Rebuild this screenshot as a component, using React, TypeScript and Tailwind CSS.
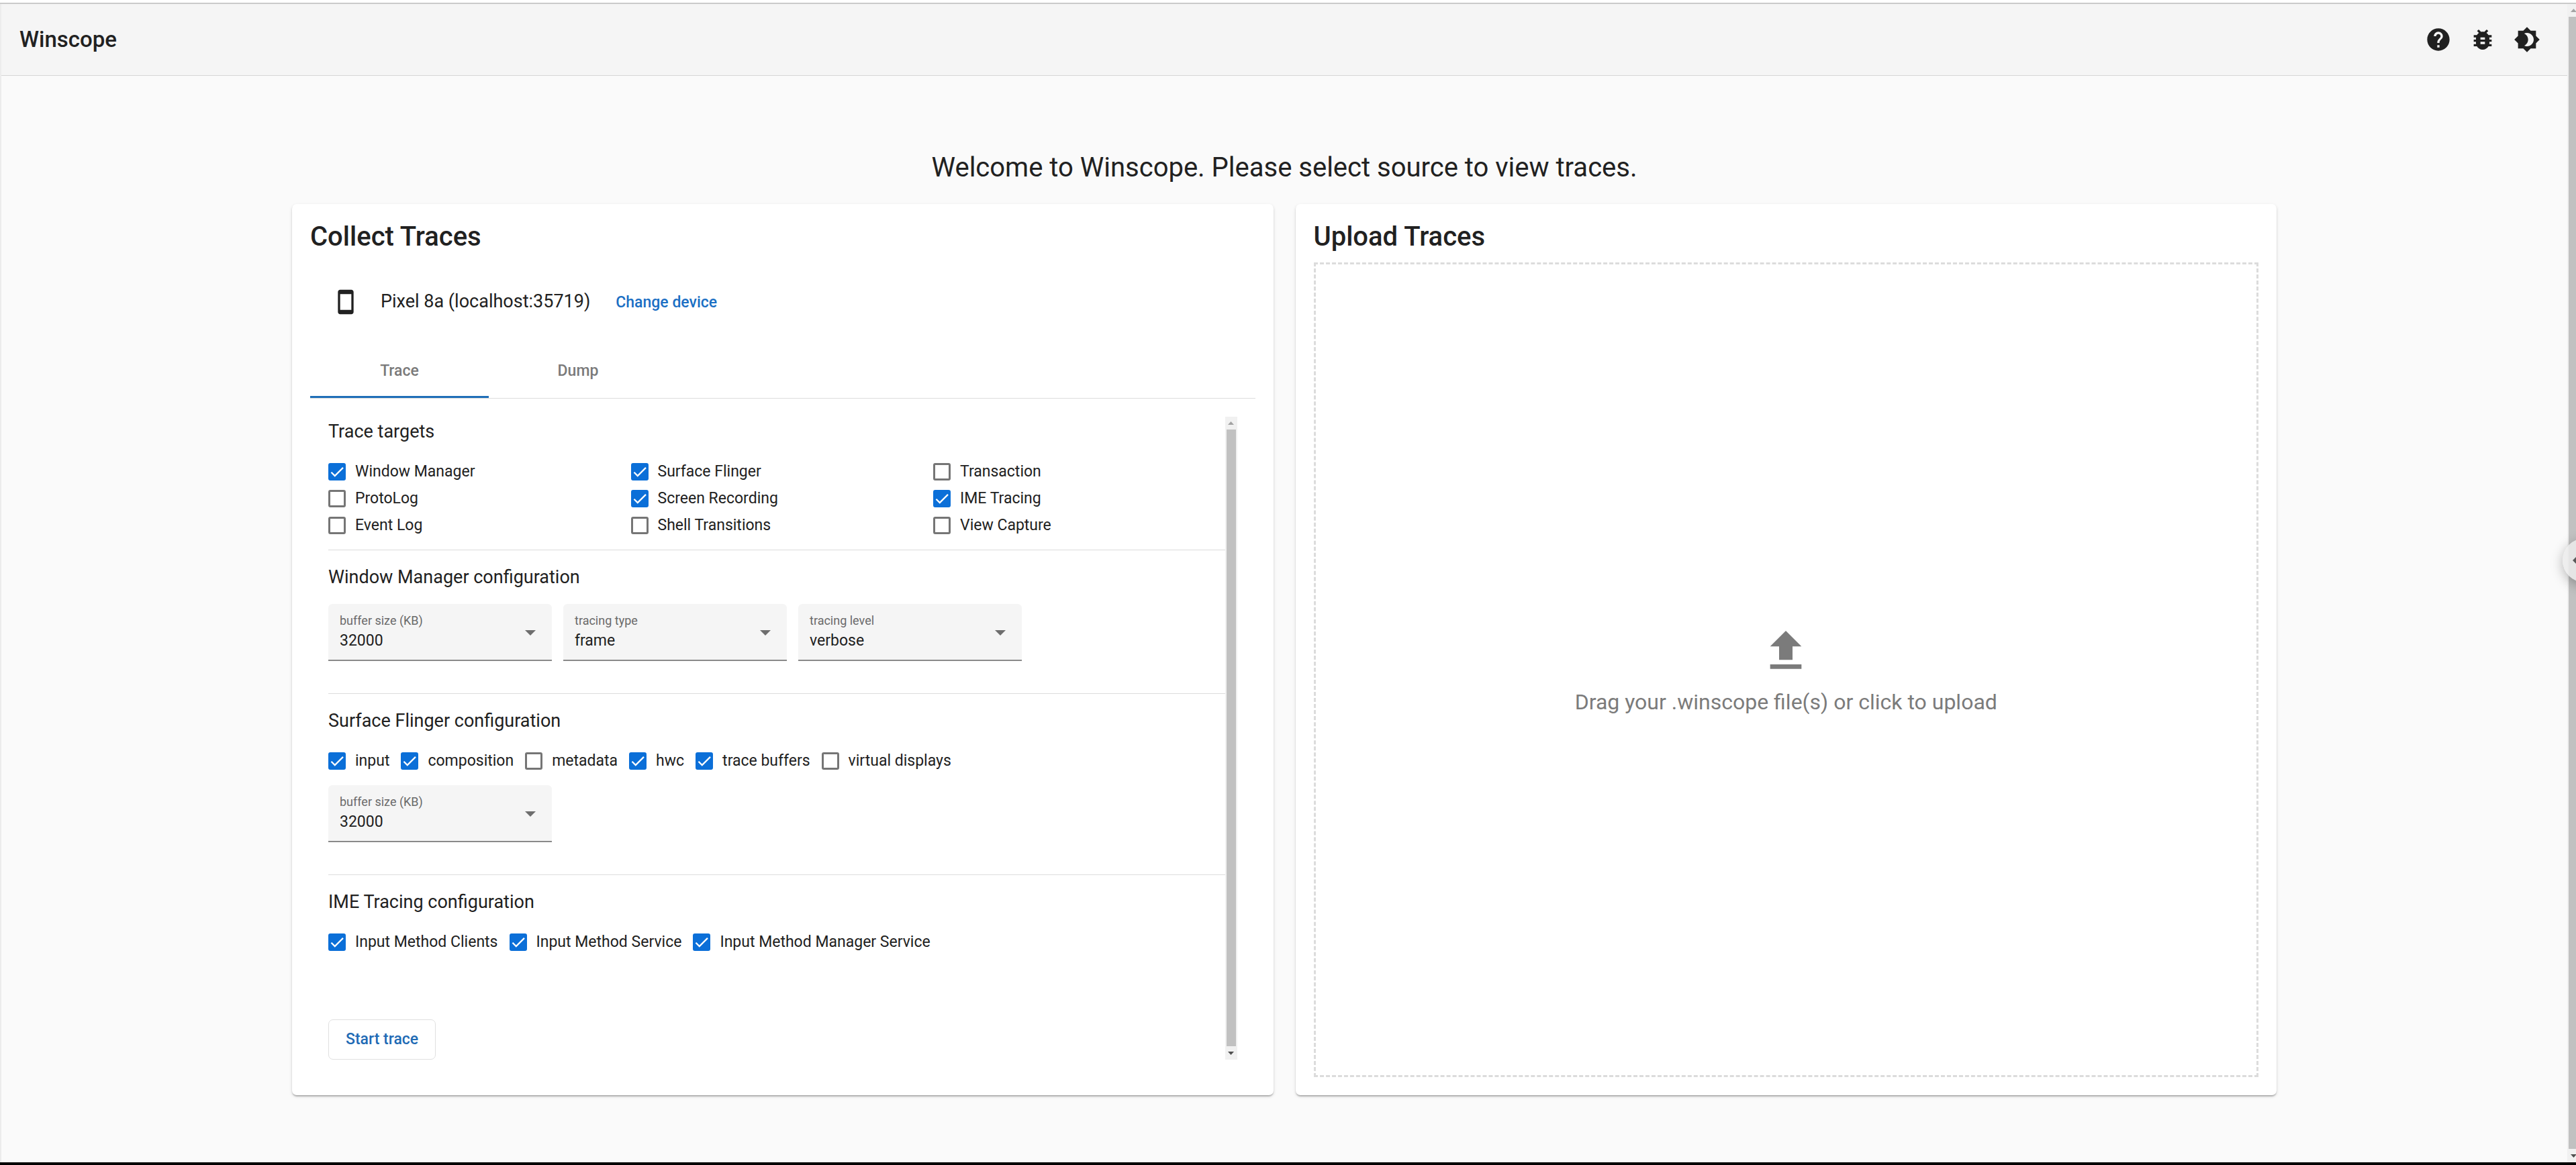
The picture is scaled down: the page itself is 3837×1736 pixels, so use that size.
import { useId, useState } from "react";

type Option = { label: string; checked: boolean };

const traceTargets: Option[] = [
  { label: "Window Manager", checked: true },
  { label: "Surface Flinger", checked: true },
  { label: "Transaction", checked: false },
  { label: "ProtoLog", checked: false },
  { label: "Screen Recording", checked: true },
  { label: "IME Tracing", checked: true },
  { label: "Event Log", checked: false },
  { label: "Shell Transitions", checked: false },
  { label: "View Capture", checked: false },
];

const surfaceFlingerOptions: Option[] = [
  { label: "input", checked: true },
  { label: "composition", checked: true },
  { label: "metadata", checked: false },
  { label: "hwc", checked: true },
  { label: "trace buffers", checked: true },
  { label: "virtual displays", checked: false },
];

const imeOptions: Option[] = [
  { label: "Input Method Clients", checked: true },
  { label: "Input Method Service", checked: true },
  { label: "Input Method Manager Service", checked: true },
];

function Icon({ path, className }: { path: string; className: string }) {
  return (
    <svg viewBox="0 0 24 24" fill="currentColor" aria-hidden="true" className={className}>
      <path d={path} />
    </svg>
  );
}

const icons = {
  help: "M12 2C6.48 2 2 6.48 2 12s4.48 10 10 10 10-4.48 10-10S17.52 2 12 2zm1 17h-2v-2h2v2zm2.07-7.75l-.9.92C13.45 12.9 13 13.5 13 15h-2v-.5c0-1.1.45-2.1 1.17-2.83l1.24-1.26c.37-.36.59-.86.59-1.41 0-1.1-.9-2-2-2s-2 .9-2 2H8c0-2.21 1.79-4 4-4s4 1.79 4 4c0 .88-.36 1.68-.93 2.25z",
  bug: "M20 8h-2.81c-.45-.78-1.07-1.45-1.82-1.96L17 4.41 15.59 3l-2.17 2.17C12.96 5.06 12.49 5 12 5c-.49 0-.96.06-1.41.17L8.41 3 7 4.41l1.62 1.63C7.88 6.55 7.26 7.22 6.81 8H4v2h2.09c-.05.33-.09.66-.09 1v1H4v2h2v1c0 .34.04.67.09 1H4v2h2.81c1.04 1.79 2.97 3 5.19 3s4.15-1.21 5.19-3H20v-2h-2.09c.05-.33.09-.66.09-1v-1h2v-2h-2v-1c0-.34-.04-.67-.09-1H20V8zm-6 8h-4v-2h4v2zm0-4h-4v-2h4v2z",
  darkMode:
    "M20 8.69V4h-4.69L12 .69 8.69 4H4v4.69L.69 12 4 15.31V20h4.69L12 23.31 15.31 20H20v-4.69L23.31 12 20 8.69zM12 18c-.89 0-1.74-.2-2.5-.55C11.56 16.5 13 14.42 13 12s-1.44-4.5-3.5-5.45C10.26 6.2 11.11 6 12 6c3.31 0 6 2.69 6 6s-2.69 6-6 6z",
  phone:
    "M17 1.01L7 1c-1.1 0-2 .9-2 2v18c0 1.1.9 2 2 2h10c1.1 0 2-.9 2-2V3c0-1.1-.9-1.99-2-1.99zM17 19H7V5h10v14z",
  upload: "M5 20h14v-2H5v2zM5 10h4v6h6v-6h4l-7-7-7 7z",
};

function IconButton({ path, label }: { path: string; label: string }) {
  return (
    <button type="button" aria-label={label} className="flex size-[66px] items-center justify-center rounded-full">
      <Icon path={path} className="size-10" />
    </button>
  );
}

function Checkbox({ label, checked: initial }: Option) {
  const id = useId();
  const [checked, setChecked] = useState(initial);
  return (
    <div className="flex h-10 items-center gap-[14px]">
      <span className="grid size-[26px]">
        <input
          id={id}
          type="checkbox"
          checked={checked}
          onChange={() => setChecked(!checked)}
          className="size-[26px] appearance-none rounded-[3px] border-3 border-[#757575] bg-white [grid-area:1/1] checked:border-[#0b6fd8] checked:bg-[#0b6fd8]"
        />
        {checked && (
          <svg viewBox="0 0 24 24" aria-hidden="true" className="pointer-events-none size-[26px] [grid-area:1/1]">
            <path d="M4.1 12.7 9 17.6 20.3 6.3" fill="none" stroke="#fff" strokeWidth="2.1" />
          </svg>
        )}
      </span>
      <label htmlFor={id} className="text-[23px] leading-7 whitespace-nowrap">
        {label}
      </label>
    </div>
  );
}

function SelectField({ label, value }: { label: string; value: string }) {
  const id = useId();
  return (
    <div className="grid w-[333px] rounded-t-[6px] bg-[#f5f5f5]">
      <select
        id={id}
        defaultValue={value}
        className="w-full appearance-none border-b-2 border-[#8a8a8a] px-[17px] pt-[41px] pb-[14px] text-[23px] leading-7 [grid-area:1/1]"
      >
        <option>{value}</option>
      </select>
      <label
        htmlFor={id}
        className="pointer-events-none self-start px-[17px] pt-[15px] text-[18px] leading-5 text-[#6a6a6a] [grid-area:1/1]"
      >
        {label}
      </label>
      <svg
        viewBox="0 0 16 8"
        aria-hidden="true"
        className="pointer-events-none mr-6 h-2 w-4 self-center justify-self-end text-[#6e6e6e] [grid-area:1/1]"
      >
        <path d="M0 0h16L8 8z" fill="currentColor" />
      </svg>
    </div>
  );
}

function SectionTitle({ children }: { children: string }) {
  return <h3 className="mb-6 text-[27px] leading-8">{children}</h3>;
}

function Divider() {
  return <hr className="mb-6 border-t border-[#dcdcdc]" />;
}

function ArrowUp() {
  return (
    <svg viewBox="0 0 9 5" className="h-[5px] w-[9px]" aria-hidden="true">
      <path d="M0 5h9L4.500 0z" fill="#a3a3a3" />
    </svg>
  );
}

function ArrowDown() {
  return (
    <svg viewBox="0 0 9 5" className="h-[5px] w-[9px]" aria-hidden="true">
      <path d="M0 0h9L4.500 5z" fill="#505050" />
    </svg>
  );
}

function Scrollbar() {
  return (
    <div aria-hidden="true" className="flex w-[18px] shrink-0 flex-col bg-[#f1f1f1]">
      <div className="flex h-[19px] items-center justify-center">
        <ArrowUp />
      </div>
      <div className="mx-[2px] flex-1 bg-[#c1c1c1]" />
      <div className="flex h-5 items-center justify-center">
        <ArrowDown />
      </div>
    </div>
  );
}

const cardClass =
  "flex min-w-0 flex-1 flex-col rounded-[7px] bg-white p-[27px] shadow-[0_3px_2px_-2px_rgba(0,0,0,0.2),0_2px_2px_0_rgba(0,0,0,0.14),0_2px_5px_0_rgba(0,0,0,0.12)]";

function CollectTraces() {
  return (
    <section className={cardClass}>
      <h2 className="text-[40px] leading-[44px] font-medium">Collect Traces</h2>

      <div className="mt-[45px] mb-[33px] flex h-[60px] items-center pl-[33px]">
        <Icon path={icons.phone} className="size-10" />
        <div className="ml-8 flex items-baseline">
          <span className="text-[27px] leading-8">Pixel 8a (localhost:35719)</span>
          <button type="button" className="ml-3 px-[26px] text-[23px] leading-8 font-medium text-[#1a6fc4]">
            Change device
          </button>
        </div>
      </div>

      <div role="tablist" className="flex border-b border-[#dcdcdc] text-[23px] leading-7 font-medium text-[#7a7a7a]">
        <button role="tab" aria-selected="true" type="button" className="h-20 w-[266px] shadow-[inset_0_-3px_0_#1f6fb8]">
          Trace
        </button>
        <button role="tab" aria-selected="false" type="button" className="h-20 w-[266px]">
          Dump
        </button>
      </div>

      <div role="tabpanel" className="flex flex-1 p-[27px] pb-[26px]">
        <div className="flex flex-1 flex-col pt-[6px]">
          <SectionTitle>Trace targets</SectionTitle>
          <div className="mb-4 grid grid-cols-3 gap-x-4">
            {traceTargets.map((o) => (
              <Checkbox key={o.label} {...o} />
            ))}
          </div>

          <Divider />
          <SectionTitle>Window Manager configuration</SectionTitle>
          <div className="mb-12 flex gap-[17px]">
            <SelectField label="buffer size (KB)" value="32000" />
            <SelectField label="tracing type" value="frame" />
            <SelectField label="tracing level" value="verbose" />
          </div>

          <Divider />
          <SectionTitle>Surface Flinger configuration</SectionTitle>
          <div className="mb-4 flex gap-[17px]">
            {surfaceFlingerOptions.map((o) => (
              <Checkbox key={o.label} {...o} />
            ))}
          </div>
          <div className="mb-12 flex">
            <SelectField label="buffer size (KB)" value="32000" />
          </div>

          <Divider />
          <SectionTitle>IME Tracing configuration</SectionTitle>
          <div className="flex gap-[17px]">
            {imeOptions.map((o) => (
              <Checkbox key={o.label} {...o} />
            ))}
          </div>

          <button
            type="button"
            className="mt-auto self-start rounded-[7px] border border-[#e0e0e0] px-[25px] py-[14px] text-[23px] leading-[30px] font-medium text-[#1f6bb5]"
          >
            Start trace
          </button>
        </div>
        <Scrollbar />
      </div>
    </section>
  );
}

function UploadTraces() {
  return (
    <section className={cardClass}>
      <h2 className="text-[40px] leading-[44px] font-medium">Upload Traces</h2>
      <button
        type="button"
        className="mt-4 flex flex-1 flex-col items-center justify-center border-3 border-dashed border-[#dcdcdc] text-[#7b7b7b]"
      >
        <Icon path={icons.upload} className="size-20" />
        <span className="mt-4 text-[32px] leading-10">Drag your .winscope file(s) or click to upload</span>
      </button>
    </section>
  );
}

export default function App() {
  return (
    <div className="relative flex min-h-screen flex-col overflow-hidden border-b-4 border-black bg-white pt-1 font-['Roboto',sans-serif] text-[#212121]">
      <div className="flex flex-1 border-t-2 border-[#cacaca]">
        <div className="flex min-w-0 flex-1 flex-col border-l-2 border-l-[#ececec] bg-[#fafafa]">
          <header className="flex h-[107px] items-center justify-between border-b border-[#d6d6d6] bg-[#f5f5f5] px-[27px]">
            <h1 className="text-[33px] leading-10 font-medium">Winscope</h1>
            <div className="flex">
              <IconButton path={icons.help} label="Documentation" />
              <IconButton path={icons.bug} label="Report bug" />
              <IconButton path={icons.darkMode} label="Switch to dark mode" />
            </div>
          </header>

          <main className="flex flex-1 flex-col pt-[112px] pb-[100px]">
            <p className="mb-[29px] text-center text-[40px] leading-[50px]">
              Welcome to Winscope. Please select source to view traces.
            </p>
            <div className="mx-auto flex w-full max-w-[2956px] flex-1 gap-[33px]">
              <CollectTraces />
              <UploadTraces />
            </div>
          </main>
        </div>
        <div className="flex w-[13px] shrink-0 overflow-hidden">
          <Scrollbar />
        </div>
      </div>

      <button
        type="button"
        aria-label="Open side panel"
        className="absolute top-[802px] right-[-46px] flex size-[66px] items-center rounded-full bg-[#ebebeb]/85 pl-[15px] shadow-[0_5px_18px_rgba(0,0,0,0.28)]"
      >
        <svg viewBox="0 0 10 20" className="h-5 w-[10px]" aria-hidden="true">
          <path d="M10 0v20L0 10z" fill="#5a5a5a" />
        </svg>
      </button>
    </div>
  );
}
